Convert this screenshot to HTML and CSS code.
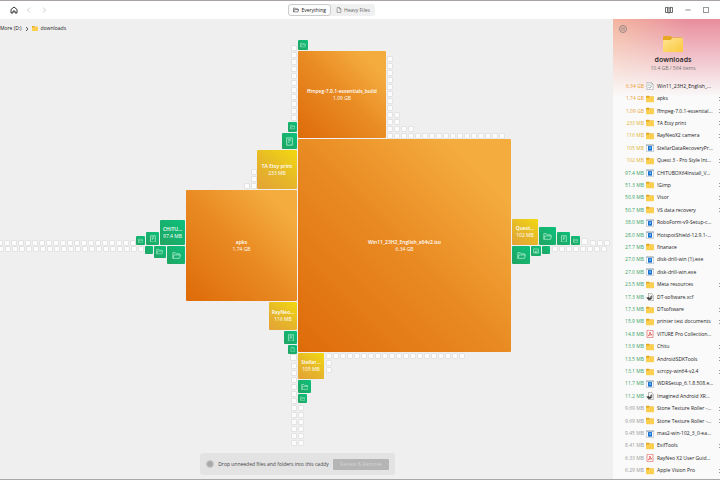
FILE: index.html
```
<!DOCTYPE html>
<html lang="en">
<head>
<meta charset="utf-8">
<title>downloads</title>
<link rel="stylesheet" href="styles.css">
</head>
<body>
<svg class="defs" aria-hidden="true">
  <symbol id="folder-line" viewBox="0 0 16 16"><path d="M1.500 13V3h4.600l1.600 2h5.800v2M1.500 13 3.400 7h11.800l-1.800 6z" fill="none" stroke="currentColor" stroke-width="1.300" stroke-linejoin="round"/></symbol>
  <symbol id="doc-line" viewBox="0 0 16 16"><path d="M3 1.500h10v13H3zM5.600 4.200h4.800M5.600 6.800h4.800M5.600 9.400h2.400" fill="none" stroke="currentColor" stroke-width="1.400" stroke-linejoin="round"/></symbol>
  <symbol id="page-line" viewBox="0 0 16 16"><path d="M3 1.500h6.500L13 5v9.500H3zM9.300 1.500V5.300H13" fill="none" stroke="currentColor" stroke-width="1.400" stroke-linejoin="round"/></symbol>
  <symbol id="image-line" viewBox="0 0 16 16"><path d="M1.500 2.500h13v11h-13z" fill="none" stroke="currentColor" stroke-width="1.600"/><path d="m3 12 3.500-5 2.500 3 1.500-1.500L13 12z" fill="currentColor"/><circle cx="11" cy="5.800" r="1.200" fill="currentColor"/></symbol>
  <symbol id="folder" viewBox="0 0 20 16"><path d="M0 2Q0 0 2 0h5.200L9 2h9q2 0 2 2v4H0z" fill="#e3a51b"/><path d="M0 5.200Q0 4 1.200 4h6.200L9.200 2.600H18.800Q20 2.600 20 4v10.500q0 1.500-1.500 1.500h-17Q0 16 0 14.500z" fill="#fccf50"/></symbol>
  <symbol id="exe" viewBox="0 0 16 14"><path d="M.5.5h15v13H.5z" fill="#fff" stroke="#8795a3"/><path d="M.5.5h15v2.200H.5z" fill="#9eb2c2"/><path d="M4 3.200h8v9H4z" fill="#1671cf"/><path d="M7 5h3v4H7z" fill="#73b9f5"/></symbol>
  <symbol id="iso" viewBox="0 0 14 16"><path d="M1 .6h8.500L13 4v11.400H1z" fill="#fff" stroke="#7d858b"/><path d="M9.300.8v3.400H13M3 4h4M3 6.500h7" fill="none" stroke="#8e969c"/><path d="m4 10 2.200 2.600L10.300 8" fill="none" stroke="#65747e" stroke-width="1.300"/></symbol>
  <symbol id="pdf" viewBox="0 0 14 16"><path d="M1 .7h12v14.600H1z" fill="#fff" stroke="#dc564e" stroke-width="1.300"/><path d="M3.500 11.700C6 9.500 7 6.500 6.800 4c.8 3 2.200 5.200 4 5.800-2.600-.4-5 .2-7.300 1.900z" fill="none" stroke="#d72e26" stroke-width="1.300"/></symbol>
  <symbol id="xcf" viewBox="0 0 16 16"><path d="M5 .6h6L14.500 4v11.400H5z" fill="#f5f5f5" stroke="#777"/><path d="M1 8c1.800 1.300 3.500 1 4.800.1C8 8 10 7 12 4.500c1 3 .4 7-2.300 8.500-3.600 2-8-.2-8.700-5z" fill="#3c3b37"/><circle cx="7.400" cy="8.600" r="1.200" fill="#fff"/><circle cx="10.300" cy="8.200" r="1.100" fill="#fff"/></symbol>
</svg>
<div class="app">
  <header class="bar">
    <nav class="nav" aria-label="History">
      <button class="icon-btn" aria-label="Home"><svg viewBox="0 0 16 16"><path d="M2 7 8 2l6 5v7h-4v-4H6v4H2z" fill="none" stroke="currentColor" stroke-width="1.800"/></svg></button>
      <button class="icon-btn off" aria-label="Back"><svg viewBox="0 0 16 16"><path d="M10 3 5 8l5 5" fill="none" stroke="currentColor" stroke-width="1.800"/></svg></button>
      <button class="icon-btn off" aria-label="Forward"><svg viewBox="0 0 16 16"><path d="m6 3 5 5-5 5" fill="none" stroke="currentColor" stroke-width="1.800"/></svg></button>
    </nav>
    <div class="tabs">
      <button class="tab on"><svg><use href="#folder-line"/></svg>Everything</button>
      <button class="tab"><svg><use href="#page-line"/></svg>Heavy Files</button>
    </div>
    <div class="win">
      <button class="icon-btn" aria-label="Guide"><svg viewBox="0 0 16 16"><path d="M8 4Q6 2 1 3v10h5q2 0 2 1.500Q8 13 10 13h5V3q-5-1-7 1v10M5 3v9M11 3v9" fill="none" stroke="currentColor" stroke-width="1.300"/></svg></button>
      <button class="icon-btn small" aria-label="Minimize"><svg viewBox="0 0 16 16"><path d="M1 8h14" stroke="currentColor" stroke-width="2"/></svg></button>
      <button class="icon-btn small" aria-label="Maximize"><svg viewBox="0 0 16 16"><path d="M1 1h14v14H1z" fill="none" stroke="currentColor" stroke-width="2"/></svg></button>
    </div>
  </header>
  <div class="body">
    <main class="main">
      <nav class="crumbs" aria-label="Path"><a href="#">More (D:)</a><svg class="sep" viewBox="0 0 8 8"><path d="m2 0 4 4-4 4" fill="none" stroke="currentColor" stroke-width="1.500"/></svg><svg class="mini"><use href="#folder"/></svg><a href="#">downloads</a></nav>
      <div class="map" id="map"></div>
      <div class="caddy"><span class="dot"></span><span class="hint">Drop unneeded files and folders into this caddy</span><button class="remove" disabled>Review &amp; Remove</button></div>
    </main>
    <aside class="side">
      <button class="pause" aria-label="Collapse panel"><svg viewBox="0 0 16 16"><circle cx="8" cy="8" r="7" fill="none" stroke="currentColor" stroke-width="1.500"/><path d="M6 4.500v7M10 4.500v7" fill="none" stroke="currentColor" stroke-width="1.500"/></svg></button>
      <div class="head">
        <svg class="big" viewBox="0 0 40 32"><defs><linearGradient id="fg" x1="0" y1="0" x2="1" y2="1"><stop stop-color="#ffe491"/><stop offset="1" stop-color="#fbc83f"/></linearGradient></defs><path d="M0 3Q0 0 3 0h12l3 3h19q3 0 3 3v8H0z" fill="#e5a820"/><path d="M0 10Q0 8 2 8h13l4-4h19q2 0 2 2v24q0 2-2 2H2q-2 0-2-2z" fill="url(#fg)"/></svg>
        <h1>downloads</h1>
        <p>10.4 GB / 564 items</p>
      </div>
      <ul class="list" id="list"></ul>
    </aside>
  </div>
  <footer class="edge"></footer>
</div>
<script src="app.js"></script>
</body>
</html>
```
FILE: styles.css
```
* { box-sizing: border-box; }
body { margin: 0; font-family: "Open Sans", "Noto Sans", sans-serif; font-size: 5px; line-height: 7px; color: #222; }
button { margin: 0; padding: 0; border: 0; background: none; font: inherit; color: inherit; }
a { color: inherit; text-decoration: none; }
svg { display: block; }
.defs { position: absolute; width: 0; height: 0; }
.app { display: flex; flex-direction: column; min-height: 100vh; background: #efefef; }
.bar { display: grid; grid-template-columns: 1fr auto 1.2fr; align-items: center; height: 19px; padding: 0 11px 0 10px; background: #fff; border-top: 1px solid #aaa3a3; }
.nav { display: flex; gap: 7px; }
.icon-btn { width: 8px; height: 8px; color: #222; }
.icon-btn svg { width: 100%; height: 100%; }
.nav .off { color: #c4c4c4; }
.win { display: flex; justify-content: flex-end; align-items: center; gap: 12px; }
.icon-btn.small { width: 6px; height: 6px; color: #666; }
.tabs { display: flex; border-radius: 3px; background: #f0f0f0; color: #666; }
.tab { display: flex; align-items: center; gap: 2px; height: 12px; padding: 0 4px; border: 1px solid transparent; border-radius: 3px; }
.tab svg { width: 6px; height: 6px; }
.tab.on { background: #fcfcfc; border-color: #ccc; color: #222; }
.body { flex: 1; display: grid; grid-template-columns: minmax(0, 1fr) 107px; }
.main { position: relative; display: flex; flex-direction: column; justify-content: space-between; padding-right: 18px; overflow: hidden; }
.crumbs { display: flex; align-items: center; gap: 3px; padding: 6px 0; }
.crumbs .sep { width: 4px; height: 4px; }
.crumbs .mini { width: 6px; height: 5px; }
.map { position: absolute; top: -19px; left: 0; }
.tile { position: absolute; display: flex; flex-direction: column; align-items: center; justify-content: center; border-radius: 1px; color: #fff; white-space: nowrap; overflow: hidden; }
.tile svg { width: 60%; height: 60%; max-width: 9px; max-height: 9px; color: #b9f0d5; }
.tile b { font-weight: 600; }
.orange { background: linear-gradient(45deg, #de6b09, #e98b23 50%, #f4ac3e 85%); }
.yellow { background: linear-gradient(35deg, #e3a236, #e7b928 50%, #f2d90f); }
.green { background: linear-gradient(45deg, #21a361, #0cc17b); }
.white { background: #fcfcfc; border: 1px solid #e3e3e3; }
.caddy { display: flex; align-items: center; align-self: center; gap: 4px; height: 22px; margin: 0 0 4px; padding: 0 6px; border-radius: 3px; background: #e3e3e3; color: #444; }
.caddy .dot { width: 8px; height: 8px; border-radius: 50%; border: 1px solid #ccc; background: #aaa; }
.remove { width: 56px; height: 11px; border-radius: 1px; background: #b5b5b5; color: #d4d4d4; }
.side { position: relative; display: flex; flex-direction: column; overflow: hidden; background: linear-gradient(#fafafa00 0, #fafafa 78px), linear-gradient(90deg, #f3b49e, #e88d9c 70%); }
.pause { position: absolute; top: 6px; left: 6px; width: 8px; height: 8px; color: #777; }
.head { display: flex; flex-direction: column; align-items: center; height: 61px; padding: 17px 0 0 13px; }
.big { width: 20px; height: 16px; }
h1 { margin: 3px 0 0; font-size: 7px; line-height: 9px; font-weight: 600; color: #222; }
p { margin: 1px 0 0; color: #777; }
.list { flex: 1; display: grid; grid-auto-rows: 1fr; margin: 0; padding: 0 0 2px; list-style: none; }
.list li { display: grid; grid-template-columns: 31px 8px 1fr 2px; align-items: center; column-gap: 2px; white-space: nowrap; }
.size { text-align: right; }
.hot { color: #eda035; }
.warm { color: #dfb43c; }
.cool { color: #3aa269; }
.cold { color: #999; }
.list svg { width: 8px; height: 8px; }
.list .name { padding-left: 1px; overflow: hidden; }
.list .more { width: 4px; height: 4px; color: #777; }
.edge { height: 1px; background: #a8a8a8; }
```
FILE: app.js
```
const use = id => `<svg><use href="#${id}"/></svg>`;

// [left, top, width, height, colour, label or icon, size]
const tiles = [
  [298, 51, 88, 87, "orange", "ffmpeg-7.0.1-essentials_build", "1.09 GB"],
  [298, 139, 213, 213, "orange", "Win11_23H2_English_x64v2.iso", "6.34 GB"],
  [186, 190, 111, 111, "orange", "apks", "1.74 GB"],
  [257, 150, 40, 39, "yellow", "TA Etsy print", "233 MB"],
  [269, 302, 28, 28, "yellow", "RayNeo…", "116 MB"],
  [298, 353, 26, 26, "yellow", "Stellar…", "105 MB"],
  [512, 219, 26, 26, "yellow", "Quest…", "102 MB"],
  [160, 220, 25, 25, "green", "CHITU…", "97.4 MB"],
  [298, 40, 10, 10, "green", "folder-line"],
  [288, 122, 9, 10, "green", "folder-line"],
  [282, 133, 15, 16, "green", "doc-line"],
  [146, 232, 13, 13, "green", "doc-line"],
  [136, 236, 9, 9, "green", "folder-line"],
  [167, 246, 18, 18, "green", "folder-line"],
  [154, 246, 12, 12, "green", "folder-line"],
  [145, 246, 8, 8, "green", ""],
  [284, 331, 13, 13, "green", "doc-line"],
  [288, 345, 9, 9, "green", "page-line"],
  [298, 380, 13, 13, "green", "folder-line"],
  [298, 394, 9, 9, "green", "folder-line"],
  [539, 227, 17, 18, "green", "folder-line"],
  [557, 232, 13, 13, "green", "doc-line"],
  [571, 236, 9, 9, "green", "folder-line"],
  [512, 246, 18, 18, "green", "folder-line"],
  [531, 246, 10, 10, "green", "image-line"],
  [542, 246, 8, 8, "green", ""],
  [290, 354, 7, 7, "white", ""],
  [581, 238, 7, 7, "white", ""]
];
// Runs of the smallest files: [left, top, count, step x, step y]
const runs = [
  [-3, 240, 20, 7, 0], [-2, 246, 21, 7, 0],
  [291, 45, 11, 0, 7], [387, 56, 11, 0, 7], [394, 112, 3, 0, 7],
  [387, 133, 17, 7, 0], [401, 126, 2, 7, 0],
  [251, 169, 2, 0, 7], [244, 183, 2, 7, 0],
  [291, 363, 12, 0, 7], [298, 405, 6, 0, 7],
  [326, 353, 20, 7, 0], [326, 360, 2, 0, 7],
  [590, 240, 3, 7, 0], [552, 246, 8, 7, 0]
];
for (const [x, y, n, dx, dy] of runs)
  for (let i = 0; i < n; i++) tiles.push([x + i * dx, y + i * dy, 6, 6, "white", ""]);

document.getElementById("map").innerHTML = tiles.map(([x, y, w, h, c, label, size]) =>
  `<div class="tile ${c}" style="left:${x}px;top:${y}px;width:${w}px;height:${h}px">${
    size ? `<b>${label}</b><span>${size}</span>` : label ? use(label) : ""}</div>`).join("");

const files = [
  ["6.34 GB", "hot", "iso", "Win11_23H2_English_..."],
  ["1.74 GB", "hot", "folder", "apks"],
  ["1.09 GB", "hot", "folder", "ffmpeg-7.0.1-essential..."],
  ["233 MB", "warm", "folder", "TA Etsy print"],
  ["116 MB", "warm", "folder", "RayNeoX2 camera"],
  ["105 MB", "warm", "exe", "StellarDataRecoveryPr..."],
  ["102 MB", "warm", "folder", "Quest 3 - Pro Style Int..."],
  ["97.4 MB", "cool", "exe", "CHITUBOX64Install_V..."],
  ["51.3 MB", "cool", "folder", "!Gimp"],
  ["50.9 MB", "cool", "folder", "Visor"],
  ["50.7 MB", "cool", "folder", "VS data recovery"],
  ["38.0 MB", "cool", "exe", "RoboForm-v9-Setup-c..."],
  ["28.0 MB", "cool", "exe", "HotspotShield-12.9.1-..."],
  ["27.7 MB", "cool", "folder", "finanace"],
  ["27.0 MB", "cool", "exe", "disk-drill-win (1).exe"],
  ["27.0 MB", "cool", "exe", "disk-drill-win.exe"],
  ["23.5 MB", "cool", "folder", "Meta resources"],
  ["17.3 MB", "cool", "xcf", "DT-software.xcf"],
  ["17.3 MB", "cool", "folder", "DTsoftware"],
  ["15.9 MB", "cool", "folder", "printer test documents"],
  ["14.8 MB", "cool", "pdf", "VITURE Pro Collection..."],
  ["13.9 MB", "cool", "folder", "Chitu"],
  ["13.5 MB", "cool", "folder", "AndroidSDKTools"],
  ["13.1 MB", "cool", "folder", "scrcpy-win64-v2.4"],
  ["11.7 MB", "cool", "exe", "WDRSetup_6.1.8.508.e..."],
  ["11.2 MB", "cool", "xcf", "Imagined Android XR..."],
  ["9.69 MB", "cold", "folder", "Stone Texture Roller -..."],
  ["9.69 MB", "cold", "folder", "Stone Texture Roller -..."],
  ["9.45 MB", "cold", "exe", "mas2-win-102_3_0-ea..."],
  ["8.41 MB", "cold", "folder", "ExifTools"],
  ["6.33 MB", "cold", "pdf", "RayNeo X2 User Guid..."],
  ["6.29 MB", "cold", "folder", "Apple Vision Pro"]
];
const more = '<svg class="more" viewBox="0 0 8 8"><path d="m2 0 4 4-4 4" fill="none" stroke="currentColor" stroke-width="1.5"/></svg>';
document.getElementById("list").innerHTML = files.map(([size, heat, icon, name]) =>
  `<li><span class="size ${heat}">${size}</span>${use(icon)}<span class="name">${name}</span>${icon === "folder" ? more : ""}</li>`).join("");
```
